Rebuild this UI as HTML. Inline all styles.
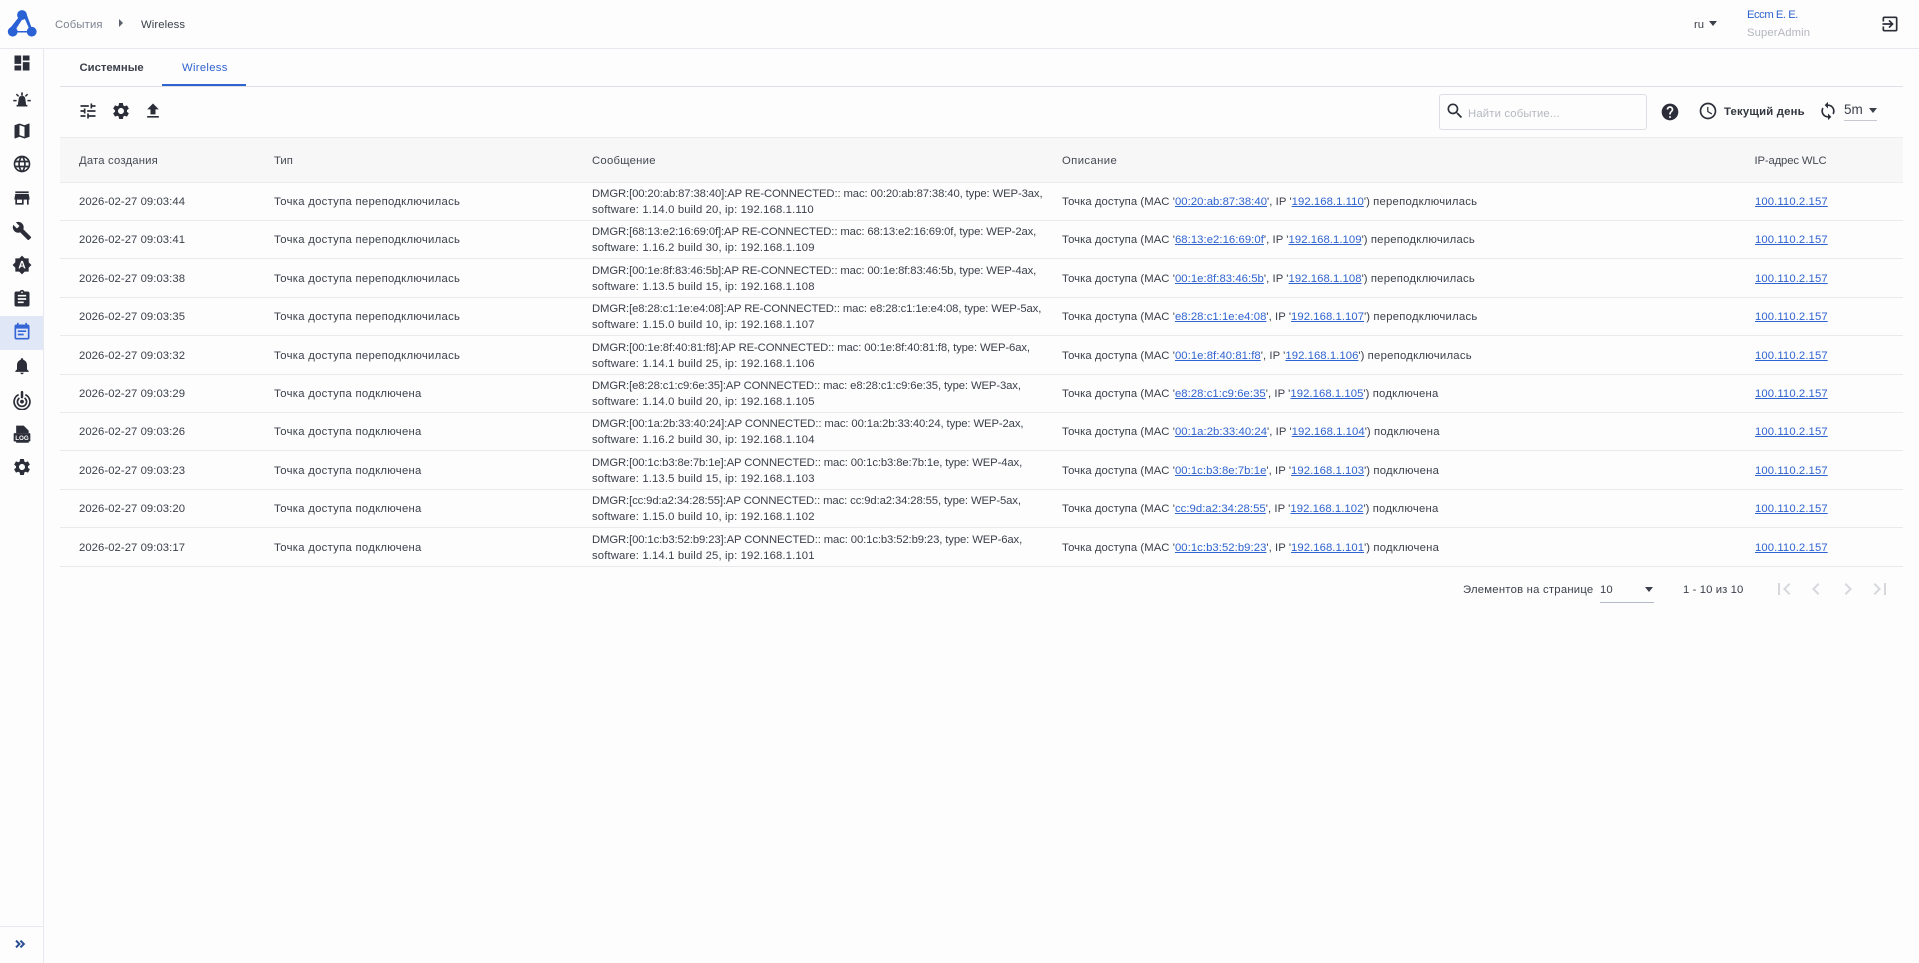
<!DOCTYPE html>
<html lang="ru">
<head>
<meta charset="utf-8">
<title>События - Wireless</title>
<style>
html,body{margin:0;padding:0;width:1919px;height:963px;overflow:hidden;background:#fdfdfd}
body{position:relative;font-family:"Liberation Sans","Noto Sans CJK SC",sans-serif;font-size:11.3px;color:#3c404b}
.a{position:absolute}
.t{position:absolute;white-space:nowrap;line-height:16px}
svg{position:absolute;display:block;fill:#2b2e38}
.sb svg{left:11.5px;width:20px;height:20px}
.r{position:absolute;left:60px;width:1843px;border-bottom:1px solid #e9eaee;box-sizing:border-box}
.c{position:absolute;top:1px;bottom:0;display:flex;align-items:center;white-space:nowrap;line-height:16px}
.c1{left:19px;letter-spacing:.06px}
.c2{left:214px;letter-spacing:.28px}
.c3{left:532px;letter-spacing:-.118px}
.c3 i{font-style:normal;letter-spacing:.135px}
.c4{left:1002px;letter-spacing:.06px}
.c4 b{font-weight:400;letter-spacing:.25px}
.c5{left:1695px;letter-spacing:.1px}
.h{color:#454952}
a{color:#2f63d0;text-decoration:underline}
.p{fill:#d6d8dd;width:24px;height:24px;top:577px}
.ti{width:20px;height:20px;top:101px}
</style>
</head>
<body>
<!-- top bar -->
<div class="a" style="left:0;top:48px;width:1919px;height:1px;background:#e8e9ef"></div>
<svg style="left:0;top:0;width:44px;height:48px;fill:#2a62d6" viewBox="0 0 44 48">
<path d="M18.500 17.500L9.800 28.500 15 30.500 22.500 19Z"/>
<path d="M24.500 18L29 28.500 31.500 27.500 26.500 14Z"/>
<path d="M17 31H27V32.500H17Z"/>
<circle cx="22" cy="15" r="4.900"/><circle cx="12.700" cy="31.700" r="4.900"/><circle cx="31.700" cy="31.700" r="4.900"/>
</svg>
<div class="t" style="left:55px;top:17px;color:#7e8390;letter-spacing:.15px">События</div>
<svg style="left:118px;top:19px;width:6px;height:8px;fill:#5c616e" viewBox="0 0 6 8"><path d="M1 0l4 4-4 4z"/></svg>
<div class="t" style="left:141px;top:17px;letter-spacing:.1px">Wireless</div>
<div class="t" style="left:1694px;top:17px">ru</div>
<svg style="left:1709px;top:21px;width:8px;height:5px;fill:#3c404b" viewBox="0 0 8 5"><path d="M0 0h8L4 5z"/></svg>
<div class="t" style="left:1747px;top:7px;color:#2f63d0;letter-spacing:-.5px">Еccm Е. Е.</div>
<div class="t" style="left:1747px;top:25px;color:#b4b7bf;letter-spacing:.1px">SuperAdmin</div>
<svg style="left:1880px;top:13.500px;width:20px;height:20px" viewBox="0 0 24 24"><path d="M10.090 15.590L11.500 17l5-5-5-5-1.410 1.410L12.670 11H3v2h9.670l-2.580 2.590zM19 3H5c-1.110 0-2 .9-2 2v4h2V5h14v14H5v-4H3v4c0 1.100.89 2 2 2h14c1.100 0 2-.9 2-2V5c0-1.100-.9-2-2-2z"/></svg>

<!-- sidebar -->
<div class="a" style="left:43px;top:49px;width:1px;height:914px;background:#e8e9ef"></div>
<div class="a" style="left:0;top:316px;width:43px;height:34px;background:#e0e7f6"></div>
<div class="a" style="left:0;top:926px;width:43px;height:1px;background:#e8e9ef"></div>
<div class="sb">
<svg style="top:53px" viewBox="0 0 24 24"><path d="M3 13h8V3H3v10zm0 8h8v-6H3v6zm10 0h8V11h-8v10zm0-18v6h8V3h-8z"/></svg>
<svg style="top:89px" viewBox="0 0 24 24"><path d="M5.500 21h13v-2h-1.500l-1-7a4 4 0 0 0-8 0l-1 7h-1.500zM11 4h2v4.500h-2zM1.500 13h4v1.800h-4zM18.500 13h4v1.800h-4zM4.600 6.800l1.300-1.300 2.700 2.700-1.300 1.300zM15.400 8.200l2.700-2.700 1.300 1.300-2.700 2.700z"/></svg>
<svg style="top:121px" viewBox="0 0 24 24"><path d="M20.500 3l-.16.03L15 5.100 9 3 3.360 4.900c-.21.070-.36.250-.36.480V20.500c0 .28.220.5.500.5l.16-.03L9 18.900l6 2.100 5.640-1.900c.21-.07.360-.25.360-.48V3.500c0-.28-.22-.5-.5-.5zM15 19l-6-2.110V5l6 2.110V19z"/></svg>
<svg style="top:154px" viewBox="0 0 24 24"><path d="M11.990 2C6.470 2 2 6.480 2 12s4.470 10 9.990 10C17.520 22 22 17.520 22 12S17.520 2 11.990 2zm6.930 6h-2.950c-.32-1.250-.78-2.450-1.380-3.560 1.840.63 3.370 1.910 4.330 3.560zM12 4.040c.83 1.200 1.480 2.530 1.910 3.960h-3.820c.43-1.430 1.080-2.760 1.910-3.960zM4.260 14C4.100 13.360 4 12.690 4 12s.1-1.360.26-2h3.380c-.08.66-.14 1.320-.14 2 0 .68.060 1.340.14 2H4.260zm.82 2h2.950c.32 1.250.78 2.450 1.380 3.560-1.840-.63-3.370-1.900-4.330-3.560zm2.950-8H5.080c.96-1.660 2.490-2.930 4.330-3.560C8.810 5.550 8.350 6.750 8.030 8zM12 19.960c-.83-1.200-1.480-2.530-1.910-3.960h3.820c-.43 1.430-1.080 2.760-1.910 3.960zM14.340 14H9.660c-.09-.66-.16-1.320-.16-2 0-.68.070-1.350.16-2h4.680c.09.650.16 1.320.16 2 0 .68-.07 1.340-.16 2zm.25 5.560c.6-1.110 1.060-2.310 1.380-3.560h2.950c-.96 1.650-2.490 2.930-4.330 3.560zM16.360 14c.08-.66.140-1.320.14-2 0-.68-.06-1.340-.14-2h3.380c.16.640.26 1.310.26 2s-.1 1.360-.26 2h-3.380z"/></svg>
<svg style="top:188px" viewBox="0 0 24 24"><path d="M20 4H4v2h16V4zm1 10v-2l-1-5H4l-1 5v2h1v6h10v-6h4v6h2v-6h1zm-9 4H6v-4h6v4z"/></svg>
<svg style="top:221px" viewBox="0 0 24 24"><path d="M22.700 19l-9.100-9.100c.9-2.300.4-5-1.500-6.900-2-2-5-2.400-7.400-1.300L9 6 6 9 1.600 4.700C.4 7.100.9 10.100 2.900 12.100c1.900 1.900 4.600 2.400 6.900 1.500l9.100 9.100c.4.4 1 .4 1.400 0l2.300-2.300c.5-.4.5-1.100.1-1.400z"/></svg>
<svg style="top:255px" viewBox="0 0 24 24"><path d="M10.850 12.650h2.300L12 9l-1.150 3.650zM20 8.690V4h-4.690L12 .69 8.690 4H4v4.690L.69 12 4 15.310V20h4.690L12 23.310 15.310 20H20v-4.690L23.310 12 20 8.690zM14.300 16l-.7-2h-3.200l-.7 2H7.800L11 7h2l3.200 9h-1.900z"/></svg>
<svg style="top:289px" viewBox="0 0 24 24"><path d="M19 3h-4.180C14.400 1.840 13.300 1 12 1c-1.300 0-2.400.84-2.820 2H5c-1.100 0-2 .9-2 2v14c0 1.100.9 2 2 2h14c1.100 0 2-.9 2-2V5c0-1.100-.9-2-2-2zm-7 0c.55 0 1 .45 1 1s-.45 1-1 1-1-.45-1-1 .45-1 1-1zm2 14H7v-2h7v2zm3-4H7v-2h10v2zm0-4H7V7h10v2z"/></svg>
<svg style="top:322px;fill:#3566d6" viewBox="0 0 24 24"><path d="M17 10H7v2h10v-2zm2-7h-1V1h-2v2H8V1H6v2H5c-1.110 0-1.990.9-1.990 2L3 19c0 1.100.89 2 2 2h14c1.100 0 2-.9 2-2V5c0-1.100-.9-2-2-2zm0 16H5V8h14v11zm-5-5H7v2h7v-2z"/></svg>
<svg style="top:356px" viewBox="0 0 24 24"><path d="M12 22c1.100 0 2-.9 2-2h-4c0 1.100.89 2 2 2zm6-6v-5c0-3.070-1.640-5.640-4.500-6.320V4c0-.83-.67-1.500-1.500-1.500s-1.500.67-1.500 1.500v.68C7.630 5.360 6 7.920 6 11v5l-2 2v1h16v-1l-2-2z"/></svg>
<svg style="top:390px" viewBox="0 0 24 24"><circle cx="12" cy="14" r="2.300"/><path d="M8 5.500A9.500 9.500 0 1 0 16 5.500" fill="none" stroke="#2b2e38" stroke-width="2"/><path d="M9 9.500A5.500 5.500 0 1 0 15 9.500" fill="none" stroke="#2b2e38" stroke-width="2"/><rect x="10.500" y="1" width="3" height="9" rx="1.500"/></svg>
<svg style="top:424px" viewBox="0 0 24 24"><path d="M5 2h9l6 6v3H5zM5 21h15v1.500H5z"/><rect x="2" y="11" width="20" height="10" rx="1"/><text x="12" y="19" font-family="Liberation Sans" font-weight="700" font-size="7.500" text-anchor="middle" fill="#fdfdfd">LOG</text></svg>
<svg style="top:457px" viewBox="0 0 24 24"><path d="M19.140 12.940c.04-.3.060-.61.060-.94 0-.32-.02-.64-.07-.94l2.030-1.580c.18-.14.230-.41.120-.61l-1.920-3.320c-.12-.22-.37-.29-.59-.22l-2.390.96c-.5-.38-1.030-.7-1.620-.94l-.36-2.540c-.04-.24-.24-.41-.48-.41h-3.840c-.24 0-.43.17-.47.41l-.36 2.540c-.59.24-1.130.57-1.620.94l-2.390-.96c-.22-.08-.47 0-.59.22L2.740 8.870c-.12.21-.08.47.12.61l2.030 1.580c-.05.3-.09.63-.09.94s.02.64.07.94l-2.030 1.580c-.18.14-.23.41-.12.61l1.920 3.320c.12.22.37.29.59.22l2.390-.96c.5.38 1.030.7 1.620.94l.36 2.540c.05.24.24.41.48.41h3.840c.24 0 .44-.17.47-.41l.36-2.540c.59-.24 1.130-.56 1.620-.94l2.390.96c.22.08.47 0 .59-.22l1.920-3.320c.12-.22.070-.47-.12-.61l-2.010-1.580zM12 15.600c-1.980 0-3.600-1.620-3.600-3.600s1.620-3.600 3.600-3.600 3.600 1.620 3.600 3.600-1.620 3.600-3.600 3.600z"/></svg>
<svg style="top:937px;left:13px;width:14px;height:14px;fill:#2d4f94" viewBox="0 0 24 24"><path d="M6.410 5L4 7.410 8.580 12 4 16.590 6.410 19l7-7z"/><path d="M14 5l-2.410 2.410L16.170 12l-4.580 4.590L14 19l7-7z"/></svg>
</div>

<!-- tabs -->
<div class="a" style="left:60px;top:86px;width:1843px;height:1px;background:#dfe0e5"></div>
<div class="a" style="left:162px;top:84px;width:84px;height:1.500px;background:#2f63d0"></div>
<div class="t" style="left:79.500px;top:60px;font-weight:700;color:#3c404b">Системные</div>
<div class="t" style="left:182px;top:60px;color:#2f63d0;letter-spacing:.3px">Wireless</div>

<!-- toolbar -->
<svg class="ti" style="left:78px" viewBox="0 0 24 24"><path d="M3 17v2h6v-2H3zM3 5v2h10V5H3zm10 16v-2h8v-2h-8v-2h-2v6h2zM7 9v2H3v2h4v2h2V9H7zm14 4v-2H11v2h10zm-6-4h2V7h4V5h-4V3h-2v6z"/></svg>
<svg class="ti" style="left:111px" viewBox="0 0 24 24"><path d="M19.140 12.940c.04-.3.060-.61.060-.94 0-.32-.02-.64-.07-.94l2.030-1.580c.18-.14.230-.41.120-.61l-1.920-3.320c-.12-.22-.37-.29-.59-.22l-2.390.96c-.5-.38-1.030-.7-1.620-.94l-.36-2.540c-.04-.24-.24-.41-.48-.41h-3.840c-.24 0-.43.17-.47.41l-.36 2.540c-.59.24-1.130.57-1.620.94l-2.390-.96c-.22-.08-.47 0-.59.22L2.740 8.870c-.12.21-.08.47.12.61l2.030 1.580c-.05.3-.09.63-.09.94s.02.64.07.94l-2.030 1.580c-.18.14-.23.41-.12.61l1.920 3.320c.12.22.37.29.59.22l2.390-.96c.5.38 1.030.7 1.620.94l.36 2.540c.05.24.24.41.48.41h3.840c.24 0 .44-.17.47-.41l.36-2.540c.59-.24 1.130-.56 1.620-.94l2.390.96c.22.08.47 0 .59-.22l1.920-3.320c.12-.22.070-.47-.12-.61l-2.010-1.580zM12 15.600c-1.980 0-3.600-1.620-3.600-3.600s1.620-3.600 3.600-3.600 3.600 1.620 3.600 3.600-1.620 3.600-3.600 3.600z"/></svg>
<svg class="ti" style="left:143px" viewBox="0 0 24 24"><path d="M9 16h6v-6h4l-7-7-7 7h4v6zm-4 2h14v2H5z"/></svg>

<div class="a" style="left:1439px;top:94px;width:208px;height:36px;box-sizing:border-box;border:1px solid #dcdee3;border-radius:3px"></div>
<svg style="left:1445px;top:100.500px;width:20px;height:20px" viewBox="0 0 24 24"><path d="M15.500 14h-.79l-.28-.27C15.410 12.590 16 11.110 16 9.500 16 5.910 13.090 3 9.500 3S3 5.910 3 9.500 5.910 16 9.500 16c1.610 0 3.090-.59 4.230-1.570l.27.28v.79l5 4.990L20.490 19l-4.990-5zm-6 0C7.010 14 5 11.990 5 9.500S7.010 5 9.500 5 14 7.010 14 9.500 11.990 14 9.500 14z"/></svg>
<div class="t" style="left:1468px;top:106px;color:#b5b8bf;letter-spacing:.16px">Найти событие...</div>
<svg style="left:1660px;top:101.500px;width:20px;height:20px" viewBox="0 0 24 24"><path d="M12 2C6.480 2 2 6.480 2 12s4.480 10 10 10 10-4.480 10-10S17.520 2 12 2zm1 17h-2v-2h2v2zm2.070-7.750l-.9.920C13.450 12.900 13 13.500 13 15h-2v-.5c0-1.100.45-2.100 1.170-2.830l1.240-1.260c.37-.36.590-.86.590-1.410 0-1.100-.9-2-2-2s-2 .9-2 2H8c0-2.210 1.790-4 4-4s4 1.790 4 4c0 .88-.36 1.680-.93 2.250z"/></svg>
<svg style="left:1698px;top:101px;width:20px;height:20px" viewBox="0 0 24 24"><path d="M11.990 2C6.470 2 2 6.480 2 12s4.470 10 9.990 10C17.520 22 22 17.520 22 12S17.520 2 11.990 2zM12 20c-4.420 0-8-3.580-8-8s3.580-8 8-8 8 3.580 8 8-3.580 8-8 8zm.5-13H11v6l5.250 3.150.75-1.230-4.500-2.670z"/></svg>
<div class="t" style="left:1724px;top:104px;font-weight:700;color:#33363f;letter-spacing:.2px">Текущий день</div>
<svg style="left:1818px;top:101px;width:20px;height:20px" viewBox="0 0 24 24"><path d="M12 4V1L8 5l4 4V6c3.310 0 6 2.690 6 6 0 1.010-.25 1.970-.7 2.800l1.460 1.460C19.540 15.030 20 13.570 20 12c0-4.420-3.580-8-8-8zm0 14c-3.310 0-6-2.690-6-6 0-1.010.25-1.970.7-2.800L5.240 7.740C4.460 8.970 4 10.430 4 12c0 4.420 3.580 8 8 8v3l4-4-4-4v3z"/></svg>
<div class="t" style="left:1844px;top:102px;font-size:13.500px">5m</div>
<svg style="left:1869px;top:108px;width:8px;height:5px;fill:#3c404b" viewBox="0 0 8 5"><path d="M0 0h8L4 5z"/></svg>
<div class="a" style="left:1844px;top:120px;width:33px;height:1px;background:#c6c9d1"></div>

<!-- table header -->
<div class="a" style="left:60px;top:137px;width:1843px;height:46px;background:#f7f7f7;border-top:1px solid #ececef;border-bottom:1px solid #ececef;box-sizing:border-box"></div>
<div class="t h" style="left:79px;top:153px;letter-spacing:.18px">Дата создания</div>
<div class="t h" style="left:274px;top:153px">Тип</div>
<div class="t h" style="left:592px;top:153px;letter-spacing:.25px">Сообщение</div>
<div class="t h" style="left:1062px;top:153px;letter-spacing:.4px">Описание</div>
<div class="t h" style="left:1754.500px;top:153px;letter-spacing:-.15px">IP-адрес WLC</div>

<!-- rows -->
<div class="r" style="top:183px;height:38px"><div class="c c1">2026-02-27 09:03:44</div><div class="c c2">Точка доступа переподключилась</div><div class="c c3"><span>DMGR:[00:20:ab:87:38:40]:AP RE-CONNECTED:: mac: 00:20:ab:87:38:40, type: WEP-3ax,<br><i>software: 1.14.0 build 20, ip: 192.168.1.110</i></span></div><div class="c c4"><span>Точка доступа (MAC '<a>00:20:ab:87:38:40</a>', IP '<a>192.168.1.110</a>') <b>переподключилась</b></span></div><div class="c c5"><a>100.110.2.157</a></div></div>
<div class="r" style="top:221px;height:38px"><div class="c c1">2026-02-27 09:03:41</div><div class="c c2">Точка доступа переподключилась</div><div class="c c3"><span>DMGR:[68:13:e2:16:69:0f]:AP RE-CONNECTED:: mac: 68:13:e2:16:69:0f, type: WEP-2ax,<br><i>software: 1.16.2 build 30, ip: 192.168.1.109</i></span></div><div class="c c4"><span>Точка доступа (MAC '<a>68:13:e2:16:69:0f</a>', IP '<a>192.168.1.109</a>') <b>переподключилась</b></span></div><div class="c c5"><a>100.110.2.157</a></div></div>
<div class="r" style="top:259px;height:39px"><div class="c c1">2026-02-27 09:03:38</div><div class="c c2">Точка доступа переподключилась</div><div class="c c3"><span>DMGR:[00:1e:8f:83:46:5b]:AP RE-CONNECTED:: mac: 00:1e:8f:83:46:5b, type: WEP-4ax,<br><i>software: 1.13.5 build 15, ip: 192.168.1.108</i></span></div><div class="c c4"><span>Точка доступа (MAC '<a>00:1e:8f:83:46:5b</a>', IP '<a>192.168.1.108</a>') <b>переподключилась</b></span></div><div class="c c5"><a>100.110.2.157</a></div></div>
<div class="r" style="top:298px;height:38px"><div class="c c1">2026-02-27 09:03:35</div><div class="c c2">Точка доступа переподключилась</div><div class="c c3"><span>DMGR:[e8:28:c1:1e:e4:08]:AP RE-CONNECTED:: mac: e8:28:c1:1e:e4:08, type: WEP-5ax,<br><i>software: 1.15.0 build 10, ip: 192.168.1.107</i></span></div><div class="c c4"><span>Точка доступа (MAC '<a>e8:28:c1:1e:e4:08</a>', IP '<a>192.168.1.107</a>') <b>переподключилась</b></span></div><div class="c c5"><a>100.110.2.157</a></div></div>
<div class="r" style="top:336px;height:39px"><div class="c c1">2026-02-27 09:03:32</div><div class="c c2">Точка доступа переподключилась</div><div class="c c3"><span>DMGR:[00:1e:8f:40:81:f8]:AP RE-CONNECTED:: mac: 00:1e:8f:40:81:f8, type: WEP-6ax,<br><i>software: 1.14.1 build 25, ip: 192.168.1.106</i></span></div><div class="c c4"><span>Точка доступа (MAC '<a>00:1e:8f:40:81:f8</a>', IP '<a>192.168.1.106</a>') <b>переподключилась</b></span></div><div class="c c5"><a>100.110.2.157</a></div></div>
<div class="r" style="top:375px;height:38px"><div class="c c1">2026-02-27 09:03:29</div><div class="c c2">Точка доступа подключена</div><div class="c c3"><span>DMGR:[e8:28:c1:c9:6e:35]:AP CONNECTED:: mac: e8:28:c1:c9:6e:35, type: WEP-3ax,<br><i>software: 1.14.0 build 20, ip: 192.168.1.105</i></span></div><div class="c c4"><span>Точка доступа (MAC '<a>e8:28:c1:c9:6e:35</a>', IP '<a>192.168.1.105</a>') <b>подключена</b></span></div><div class="c c5"><a>100.110.2.157</a></div></div>
<div class="r" style="top:413px;height:38px"><div class="c c1">2026-02-27 09:03:26</div><div class="c c2">Точка доступа подключена</div><div class="c c3"><span>DMGR:[00:1a:2b:33:40:24]:AP CONNECTED:: mac: 00:1a:2b:33:40:24, type: WEP-2ax,<br><i>software: 1.16.2 build 30, ip: 192.168.1.104</i></span></div><div class="c c4"><span>Точка доступа (MAC '<a>00:1a:2b:33:40:24</a>', IP '<a>192.168.1.104</a>') <b>подключена</b></span></div><div class="c c5"><a>100.110.2.157</a></div></div>
<div class="r" style="top:451px;height:39px"><div class="c c1">2026-02-27 09:03:23</div><div class="c c2">Точка доступа подключена</div><div class="c c3"><span>DMGR:[00:1c:b3:8e:7b:1e]:AP CONNECTED:: mac: 00:1c:b3:8e:7b:1e, type: WEP-4ax,<br><i>software: 1.13.5 build 15, ip: 192.168.1.103</i></span></div><div class="c c4"><span>Точка доступа (MAC '<a>00:1c:b3:8e:7b:1e</a>', IP '<a>192.168.1.103</a>') <b>подключена</b></span></div><div class="c c5"><a>100.110.2.157</a></div></div>
<div class="r" style="top:490px;height:38px"><div class="c c1">2026-02-27 09:03:20</div><div class="c c2">Точка доступа подключена</div><div class="c c3"><span>DMGR:[cc:9d:a2:34:28:55]:AP CONNECTED:: mac: cc:9d:a2:34:28:55, type: WEP-5ax,<br><i>software: 1.15.0 build 10, ip: 192.168.1.102</i></span></div><div class="c c4"><span>Точка доступа (MAC '<a>cc:9d:a2:34:28:55</a>', IP '<a>192.168.1.102</a>') <b>подключена</b></span></div><div class="c c5"><a>100.110.2.157</a></div></div>
<div class="r" style="top:528px;height:39px"><div class="c c1">2026-02-27 09:03:17</div><div class="c c2">Точка доступа подключена</div><div class="c c3"><span>DMGR:[00:1c:b3:52:b9:23]:AP CONNECTED:: mac: 00:1c:b3:52:b9:23, type: WEP-6ax,<br><i>software: 1.14.1 build 25, ip: 192.168.1.101</i></span></div><div class="c c4"><span>Точка доступа (MAC '<a>00:1c:b3:52:b9:23</a>', IP '<a>192.168.1.101</a>') <b>подключена</b></span></div><div class="c c5"><a>100.110.2.157</a></div></div>

<!-- pagination -->
<div class="t" style="left:1463px;top:581.500px;letter-spacing:.23px">Элементов на странице</div>
<div class="t" style="left:1600px;top:581.500px;letter-spacing:.1px">10</div>
<svg style="left:1645px;top:587px;width:8px;height:5px;fill:#3c404b" viewBox="0 0 8 5"><path d="M0 0h8L4 5z"/></svg>
<div class="a" style="left:1600px;top:602px;width:54px;height:1px;background:#b4b9c9"></div>
<div class="t" style="left:1683px;top:581.500px;letter-spacing:.1px">1 - 10 из 10</div>
<svg class="p" style="left:1772px" viewBox="0 0 24 24"><path d="M18.410 16.590L13.820 12l4.590-4.590L17 6l-6 6 6 6zM6 6h2v12H6z"/></svg>
<svg class="p" style="left:1804px" viewBox="0 0 24 24"><path d="M15.410 7.410L14 6l-6 6 6 6 1.410-1.410L10.830 12z"/></svg>
<svg class="p" style="left:1836px" viewBox="0 0 24 24"><path d="M10 6L8.590 7.410 13.170 12l-4.580 4.590L10 18l6-6z"/></svg>
<svg class="p" style="left:1868px" viewBox="0 0 24 24"><path d="M5.590 7.410L10.180 12l-4.590 4.590L7 18l6-6-6-6zM16 6h2v12h-2z"/></svg>
</body>
</html>
